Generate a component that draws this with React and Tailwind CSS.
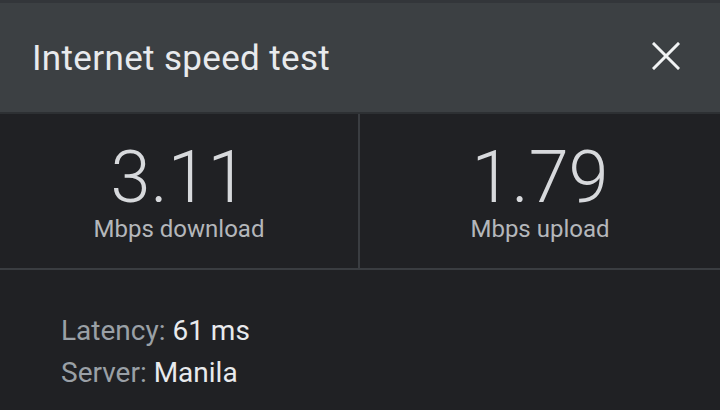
import React from "react";

const stats = [
  { value: "3.11", label: "Mbps download" },
  { value: "1.79", label: "Mbps upload" },
];

export default function App() {
  return (
    <div
      className="w-[720px] h-[410px] bg-[#202124] flex flex-col overflow-hidden"
      style={{ fontFamily: "Roboto, 'Noto Sans', sans-serif" }}
    >
      {/* Header */}
      <div className="h-[114px] bg-[#3c4043] border-t-[3px] border-[#33363a] border-b-[2px] border-b-[#2d3033] flex items-center justify-between pl-[32px] pr-[39px]">
        <h1 className="text-[35px] leading-[40px] text-[#e8eaed] tracking-[0.35px] pt-[2px]">Internet speed test</h1>
        <button className="w-[30px] h-[30px] flex items-center justify-center mb-[4px]">
          <svg width="28" height="28" viewBox="0 0 28 28" fill="none">
            <path d="M2 2L26 26M26 2L2 26" stroke="#f1f3f4" strokeWidth="3" strokeLinecap="square" />
          </svg>
        </button>
      </div>

      {/* Results */}
      <div className="h-[156px] grid grid-cols-2 border-b-2 border-[#3a3d41]">
        {stats.map((s, i) => (
          <div
            key={s.label}
            className={`flex flex-col items-center justify-center pt-[6px] ${i === 0 ? "border-r-2 border-[#3a3d41]" : ""}`}
          >
            <div className="text-[72px] font-light leading-[66px] text-[#d7d9dc]">{s.value}</div>
            <div className="text-[24px] leading-[28px] text-[#b4b7bb] mt-[4px]">{s.label}</div>
          </div>
        ))}
      </div>

      {/* Details */}
      <div className="flex-1 pl-[61px] pt-[40px] text-[28px] leading-[42px]">
        <div>
          <span className="text-[#9aa0a6]">Latency: </span>
          <span className="text-[#e8eaed]">61 ms</span>
        </div>
        <div>
          <span className="text-[#9aa0a6]">Server: </span>
          <span className="text-[#e8eaed]">Manila</span>
        </div>
      </div>
    </div>
  );
}
